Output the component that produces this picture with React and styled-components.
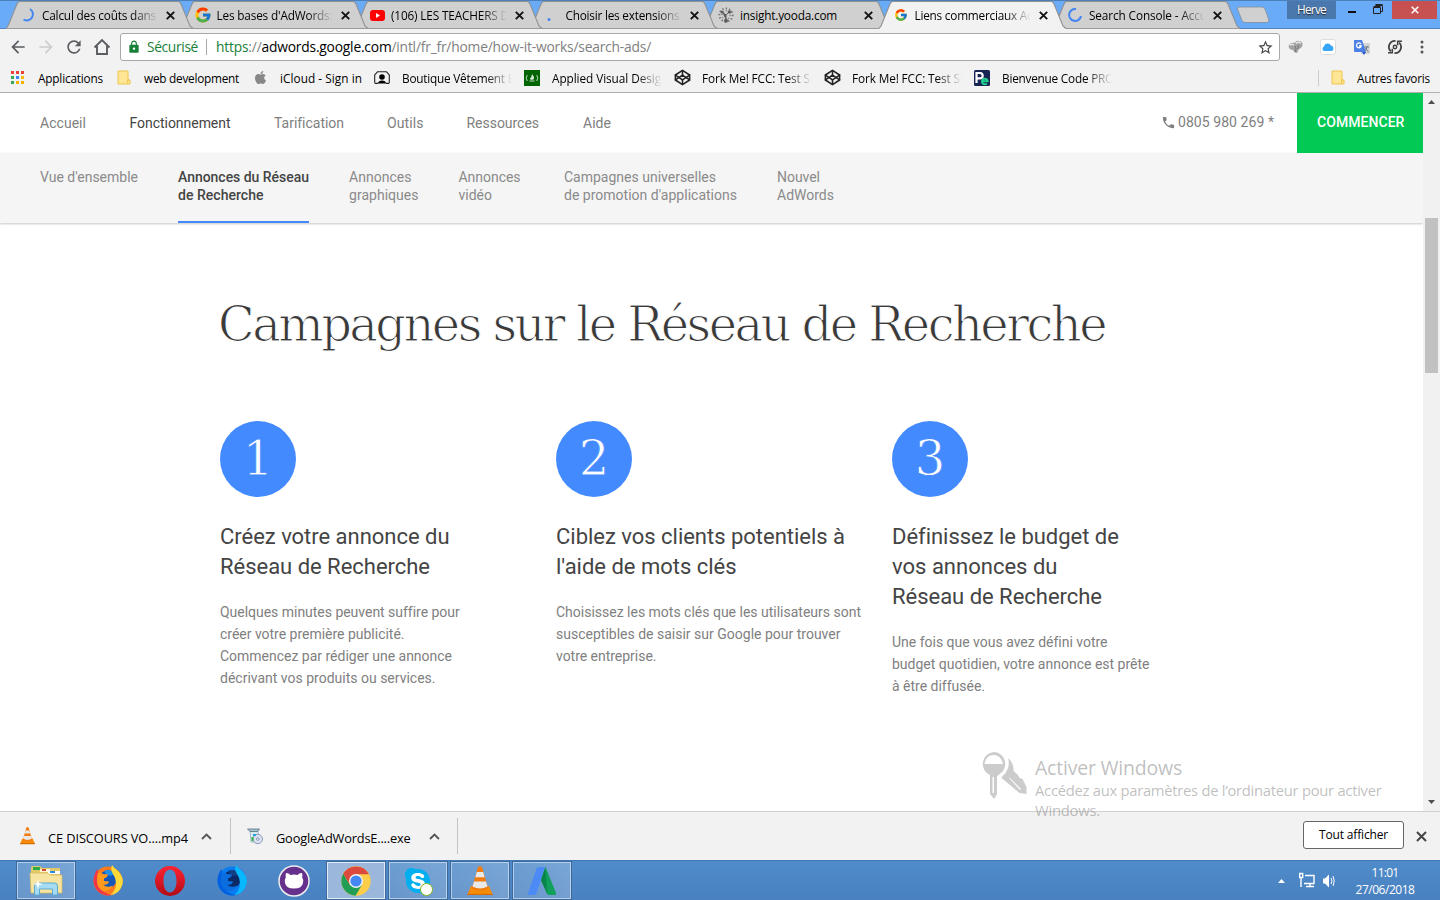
import React, { useLayoutEffect, useRef, useState } from "react";
import styled, { createGlobalStyle, css } from "styled-components";
import { FcGoogle } from "react-icons/fc";
import { FaApple, FaSkype } from "react-icons/fa";
import { MdPhone, MdStarBorder, MdLock, MdArrowBack, MdArrowForward, MdRefresh } from "react-icons/md";
import { FiCodepen } from "react-icons/fi";

const Global = createGlobalStyle`
  *{box-sizing:border-box}
  html,body{margin:0;padding:0;overflow:hidden;background:#fff}
  svg{display:block;flex:none}
`;
const ui = `"Segoe UI","Open Sans","Noto Sans",sans-serif`;
const roboto = `Roboto,"Liberation Sans",sans-serif`;

/* One line of text whose tracking is computed to fill a known width. */
const Line = styled.span`
  display: inline-block;
  white-space: pre;
  width: ${(p) => p.$w}px;
  flex: none;
`;
function Fit({ w, children, className }) {
  const ref = useRef(null);
  const [space, setSpace] = useState(0);
  useLayoutEffect(() => {
    const el = ref.current;
    const natural = el.getBoundingClientRect().width;
    const n = el.textContent.length;
    setSpace((w - natural) / n);
  }, [w]);
  return (
    <Line $w={w} className={className}>
      <span ref={ref} style={{ letterSpacing: `${space}px` }}>{children}</span>
    </Line>
  );
}

const Screen = styled.div`
  position: relative;
  width: 1440px;
  height: 900px;
  display: flex;
  flex-direction: column;
  overflow: hidden;
  font: 11.8px/16px ${ui};
  color: #000;
`;

/* ---------- tab strip ---------- */
const TabStrip = styled.div`
  height: 29px;
  flex: none;
  display: flex;
  padding-left: 6px;
  background: #6aabf7;
  border-top: 1px solid #4d7fb9;
  box-shadow: inset 0 -1px #5585bd;
`;
const TabBox = styled.div`
  position: relative;
  flex: none;
  width: 188px;
  height: 28px;
  margin-right: -13.5px;
  display: flex;
  align-items: center;
  padding: 0 0 0 14px;
  z-index: ${(p) => p.$z};
`;
const TabShape = styled.svg`
  position: absolute;
  left: 0;
  top: 0;
`;
const TabIcon = styled.span`
  position: relative;
  width: 16px;
  height: 16px;
  margin-right: 6px;
  display: flex;
  align-items: center;
  justify-content: center;
  flex: none;
`;
const fade = css`
  overflow: hidden;
  white-space: pre;
  mask-image: linear-gradient(90deg, #000 calc(100% - 26px), transparent);
`;
const TabTitle = styled.span`
  position: relative;
  width: 116px;
  margin-right: 8px;
  ${(p) => p.$fade && fade}
`;
const CloseMark = styled.svg`
  position: relative;
`;
const Close = ({ size = 9, w = 1.9, color = "#111" }) => (
  <CloseMark width={size} height={size} viewBox="0 0 9 9">
    <path d="M.8.8l7.4 7.4M8.2.8L.8 8.2" stroke={color} strokeWidth={w} fill="none" />
  </CloseMark>
);
function Tab({ icon, title, w, active, z, clip = true }) {
  return (
    <TabBox $z={active ? 20 : z}>
      <TabShape width="190" height="29" viewBox="0 0 190 29">
        <path d="M0 28L2 25 11 3Q12 .5 14 .5H172Q174 .5 175 3L184 25 187 28Z" fill={active ? "#f2f2f2" : "#d0d0d0"} />
        <path d="M0 27.5L2 25 11 3Q12 .5 14 .5H172Q174 .5 175 3L184 25 187 27.5" fill="none" stroke="#8e9194" strokeWidth="1.1" />
        {!active && <path d="M1 27.5H187" stroke="#9a9a9a" />}
      </TabShape>
      <TabIcon>{icon}</TabIcon>
      <TabTitle $fade={clip}><Fit w={w}>{title}</Fit></TabTitle>
      <Close />
    </TabBox>
  );
}
const NewTab = styled.svg`
  margin: 5px 0 0 8px;
`;
const WindowControls = styled.div`
  margin-left: auto;
  display: flex;
  align-items: flex-start;
  padding-right: 3px;
`;
const UserBadge = styled.div`
  width: 49px;
  height: 18px;
  margin-right: 12px;
  background: #4a78ac;
  color: #fff;
  text-align: center;
  line-height: 16px;
  text-shadow: 0 1px 1px #223;
`;
const CloseWindow = styled.div`
  width: 45px;
  height: 18px;
  margin-left: 7px;
  background: #c75050;
  display: flex;
  align-items: center;
  justify-content: center;
`;

/* ---------- toolbar ---------- */
const Toolbar = styled.div`
  height: 36px;
  flex: none;
  display: flex;
  align-items: center;
  background: #f2f2f2;
  padding: 0 16px 0 8px;
  color: #5a5a5a;
`;
const ToolButton = styled.span`
  width: 28px;
  flex: none;
  padding-left: ${(p) => p.$l || 0}px;
  color: ${(p) => (p.$off ? "#ccc" : "#5a5d61")};
`;
const Omnibox = styled.div`
  width: 1160px;
  flex: none;
  height: 28px;
  background: #fff;
  border: 1px solid #a8a8a8;
  border-radius: 3px;
  display: flex;
  align-items: center;
  padding: 0 5px 0 6px;
  font-size: 13.8px;
  color: #808080;
`;
const Secure = styled.span`
  color: #188038;
  margin-left: 6px;
  padding-right: 8px;
  margin-right: 9px;
  height: 16px;
  line-height: 15px;
  border-right: 1px solid #aaa;
`;
const Url = styled.span`
  flex: 1;
  line-height: 18px;
  em { color: #188038; font-style: normal; }
  b { color: #000; font-weight: 400; }
`;
const Extensions = styled.div`
  flex: 1;
  display: flex;
  align-items: center;
  justify-content: space-between;
  padding-left: 8px;
`;
const Bookmarks = styled.div`
  height: 28px;
  flex: none;
  display: flex;
  align-items: center;
  background: #f2f2f2;
  border-bottom: 1px solid #b0b0b0;
  padding: 0 10px 2px;
`;
const Bookmark = styled.div`
  flex: none;
  display: flex;
  align-items: center;
  width: ${(p) => p.$slot}px;
  > :last-child { ${(p) => p.$fade && fade} width: ${(p) => (p.$fade ? "110px" : "auto")}; }
`;
const BookmarkIcon = styled.span`
  width: ${(p) => p.$w || 28}px;
  flex: none;
`;
const OtherBookmarks = styled.div`
  margin-left: auto;
  border-left: 1px solid #ccc;
  display: flex;
  align-items: center;
  padding-left: 12px;
`;

/* ---------- web page ---------- */
const Viewport = styled.div`
  height: 718px;
  flex: none;
  display: flex;
  background: #fff;
  font-family: ${roboto};
`;
const Page = styled.main`
  width: 1423px;
`;
const MainNav = styled.nav`
  height: 60px;
  display: flex;
  align-items: center;
  padding-left: 40px;
  font-size: 14px;
  color: #808080;
`;
const NavLink = styled.a`
  width: ${(p) => p.$slot}px;
  color: ${(p) => (p.$on ? "#444" : "#808080")};
`;
const Phone = styled.div`
  margin-left: auto;
  display: flex;
  align-items: center;
  gap: 2px;
  padding-bottom: 2px;
`;
const Cta = styled.button`
  width: 126px;
  height: 60px;
  margin-left: 23px;
  border: 0;
  padding: 0 0 2px 20px;
  text-align: left;
  background: #02c953;
  color: #fff;
  font: 500 14px/18px ${roboto};
`;
const SubNav = styled.nav`
  height: 70px;
  display: flex;
  background: #f5f5f5;
  padding-left: 40px;
  box-shadow: 0 1px 2px rgba(0,0,0,.22);
`;
const SubLink = styled.a`
  margin-right: ${(p) => p.$gap || 40}px;
  padding-top: 15px;
  height: 70px;
  display: flex;
  flex-direction: column;
  font-size: 14px;
  line-height: 18px;
  font-weight: ${(p) => (p.$on ? 500 : 400)};
  color: ${(p) => (p.$on ? "#444" : "#8a8a8a")};
  border-bottom: ${(p) => (p.$on ? "2px solid #448aff" : "0")};
`;
const slab = css`
  font-family: "Roboto Slab","DejaVu Serif",serif;
  font-weight: 300;
`;
const Title = styled.h1`
  ${slab}
  margin: 66px 0 0 218px;
  height: 70px;
  font-size: 48px;
  line-height: 70px;
  color: #3a3a3a;
  -webkit-text-stroke: 1.1px #fff;
`;
const Steps = styled.section`
  display: grid;
  grid-template-columns: repeat(3, 336px);
  padding: 62px 0 0 220px;
`;
const Step = styled.article`
  display: flex;
  flex-direction: column;
`;
const StepNumber = styled.div`
  ${slab}
  width: 76px;
  height: 76px;
  border-radius: 50%;
  background: #448aff;
  color: #fff;
  font-size: 48px;
  line-height: 74px;
  text-align: center;
  -webkit-text-stroke: .8px #448aff;
`;
const StepTitle = styled.h2`
  margin: 25px 0 19px;
  display: flex;
  flex-direction: column;
  font-size: 22px;
  line-height: 30px;
  font-weight: 400;
  color: #444;
`;
const StepText = styled.p`
  margin: 0;
  display: flex;
  flex-direction: column;
  font-size: 14px;
  line-height: 22px;
  color: #808080;
`;
const Scrollbar = styled.div`
  width: 17px;
  background: #f1f1f1;
  display: flex;
  flex-direction: column;
  align-items: center;
  padding: 7px 0 7px;
`;
const Thumb = styled.div`
  width: 13px;
  height: 155px;
  margin-top: 114px;
  margin-bottom: auto;
  background: #c1c1c1;
`;

/* ---------- downloads ---------- */
const Downloads = styled.div`
  height: 49px;
  flex: none;
  display: flex;
  align-items: center;
  border-top: 1px solid #cfcfcf;
  background: #f2f2f2;
  padding: 0 13px 0 20px;
`;
const Download = styled.div`
  width: 211px;
  height: 36px;
  display: flex;
  align-items: center;
  padding: 0;
  margin-right: 16px;
  border-right: 1px solid #c4c4c4;
  font-size: 12.8px;
`;
const DownloadName = styled.span`
  width: 153px;
  margin: 4px 0 0 13px;
`;
const ShowAll = styled.button`
  margin: 0 12px 3px auto;
  width: 101px;
  height: 28px;
  padding: 0;
  background: #fff;
  border: 1px solid #666;
  border-radius: 3px;
  font: 500 12px/24px ${ui};
  color: #000;
`;

/* ---------- taskbar ---------- */
const Taskbar = styled.div`
  height: 40px;
  flex: none;
  display: flex;
  padding: 0 0 0 16px;
  background: linear-gradient(#4f8bca, #4a81c0);
  border-top: 1px solid #4079b8;
`;
const Task = styled.div`
  width: 60px;
  height: 39px;
  margin-right: 2px;
  display: flex;
  align-items: center;
  justify-content: center;
  border: 1px solid transparent;
  ${(p) => p.$open && css`
    border-color: #3f6b9c;
    box-shadow: inset 0 0 0 1px rgba(225,238,250,.6);
    background: linear-gradient(90deg, rgba(255,255,255,.16), rgba(255,255,255,.24));
  `}
  ${(p) => p.$active && css`
    background: #9bb7db;
    box-shadow: inset 0 0 0 1px #e2ebf5;
  `}
`;
const Tray = styled.div`
  margin-left: auto;
  display: flex;
  align-items: center;
  color: #fff;
  font-size: 12px;
`;
const Clock = styled.div`
  display: flex;
  flex-direction: column;
  align-items: center;
  width: 70px;
  margin: 0 20px 0 15px;
  line-height: 17px;
`;
const Watermark = styled.div`
  position: absolute;
  left: 981px;
  top: 751px;
  display: flex;
  gap: 8px;
  color: rgba(120,120,120,.48);
  font-size: 14.8px;
  line-height: 20px;
`;
const WatermarkText = styled.div`
  display: flex;
  flex-direction: column;
  padding-top: 4px;
`;
const WatermarkTitle = styled.div`
  font-size: 19.5px;
  line-height: 26px;
  height: 25px;
`;

/* ---------- drawings ---------- */
const Spinner = ({ d }) => (
  <svg width="16" height="16" viewBox="0 0 16 16"><path d={d} fill="none" stroke="#4285f4" strokeWidth="2" /></svg>
);
const YouTube = () => (
  <svg width="15" height="11" viewBox="0 0 15 11"><rect width="15" height="11" rx="3" fill="#f00" /><path d="M6 3l4 2.5L6 8z" fill="#fff" /></svg>
);
const Yooda = () => (
  <svg width="16" height="16" viewBox="0 0 16 16" fill="#5c5c5c">
    <circle cx="8" cy="8" r="6.6" fill="none" stroke="#777" strokeWidth="2" strokeDasharray="1.3 2.1" />
    <circle cx="8" cy="8" r="4.2" fill="none" stroke="#888" strokeWidth="1.4" strokeDasharray="1.2 2" />
    <circle cx="8" cy="13.8" r="2" /><circle cx="4" cy="5" r="1.5" /><circle cx="11.5" cy="5" r="1.8" />
    <path d="M8 13V8L4 5M8 8l3-3" stroke="#5c5c5c" />
  </svg>
);
const Folder = () => (
  <svg width="14" height="15" viewBox="0 0 14 15">
    <path d="M1 1h10v9h2v4H1z" fill="#ffe694" stroke="#efc64f" /><path d="M10.5 13.5V10h2" fill="none" stroke="#efc64f" />
  </svg>
);
const appColors = ["#ea4335", "#ea4335", "#ea4335", "#34a853", "#4285f4", "#fbbc05", "#34a853", "#f4b400", "#f4b400"];
const Apps = () => (
  <svg width="14" height="13" viewBox="-1 0 14 13">
    {appColors.map((c, i) => (
      <rect key={i} x={(i % 3) * 5} y={Math.floor(i / 3) * 5} width="3" height="3" fill={c} />
    ))}
  </svg>
);
const Shop = () => (
  <svg width="16" height="14" viewBox="0 0 16 14">
    <path d="M4 12.4H1.5Q.7 12.4.7 11V4L3.5.8h9L15.3 4v7q0 1.4-.8 1.4H12" fill="none" stroke="#222" strokeWidth="1.1" />
    <circle cx="8" cy="6" r="2.8" /><path d="M3.8 12.6Q4.500 9.600 8 9.600t4.200 3z" />
  </svg>
);
const Camp = () => (
  <svg width="16" height="16" viewBox="0 0 16 16">
    <rect width="16" height="16" fill="#006400" />
    <path d="M3.3 5Q1 8 3.3 11M12.7 5Q15 8 12.7 11M5.5 11h5" fill="none" stroke="#cfe3cf" strokeWidth=".9" />
    <path d="M8 4c.8 1.5 2.3 2.200 2 4-.2 1.300-1 1.800-1 1.800H7S5.700 9 6 7.700l1 .3z" fill="#d9e8d9" />
  </svg>
);
const Pe = () => (
  <svg width="16" height="16" viewBox="0 0 16 16">
    <rect width="16" height="16" rx="1.5" fill="#182453" />
    <path d="M2.5 13V3H6a2.700 2.700 0 0 1 0 5.400H3" fill="none" stroke="#fff" strokeWidth="2.2" />
    <path d="M8 11.300h5.600A2.800 2.800 0 1 0 12.800 13.500" fill="none" stroke="#1fd490" strokeWidth="2" />
  </svg>
);
const Home = () => (
  <svg width="18" height="18" viewBox="0 0 18 18"><path d="M1.5 9.500L9 2l7.500 7.500M4 8v8h10V8" fill="none" stroke="#5a5d61" strokeWidth="1.9" /></svg>
);
const Brain = () => (
  <svg width="15" height="14" viewBox="0 0 15 14">
    <path d="M.5 6Q1 3 4 3q2-1 3 0 1-3 4-2 4 0 3.500 4.500Q14 8 11 9l-2 4q-3 0-4-3-4 0-4.500-4" fill="#a3a3a3" />
    <path d="M1.500 5.500Q3 3.500 6 5M8 3.500q2-2 5-.5" fill="none" stroke="#e6e6e6" strokeWidth="1.5" />
    <path d="M7 6q1.500 2 .5 6M10 5q1 2-.5 4" stroke="#777" fill="none" />
  </svg>
);
const ICloud = () => (
  <svg width="16" height="16" viewBox="0 0 16 16">
    <rect x=".5" y=".5" width="15" height="15" rx="2" fill="#fff" stroke="#ddd" />
    <path d="M4 12a2.500 2.500 0 0 1 0-4.600A3.800 3.800 0 0 1 11 6.500a3 3 0 0 1 1 5.500z" fill="#36a5f5" />
  </svg>
);
const Translate = () => (
  <svg width="16" height="16" viewBox="0 0 16 16">
    <rect x="7" y="4" width="9" height="11" fill="#d5d5d5" /><path d="M0 1h8l4 12H1q-1 0-1-1z" fill="#4a80e8" /><path d="M8 13h4l-2 3z" fill="#2a56c6" />
    <path d="M7 5.200A2.400 2.400 0 1 0 7.200 7H5" fill="none" stroke="#fff" strokeWidth="1.3" /><path d="M10 8h5M13 7v1q-.5 3-2.500 4M11.500 9l3 4" stroke="#6b7d8c" fill="none" />
  </svg>
);
const SyncIcon = () => (
  <svg width="16" height="16" viewBox="0 0 16 16" fill="none" stroke="#444" strokeWidth="1.8">
    <path d="M8.500 2A6 6 0 0 0 3.800 12.300" /><path d="M7.500 14A6 6 0 0 0 12.200 3.700" />
    <path d="M1 13.800h4.300V9.800M15 2.200h-4.300v4" strokeWidth="1.6" />
    <circle cx="8" cy="8" r="1.7" strokeWidth="1.5" />
  </svg>
);
const Dots = () => (
  <svg width="4" height="14" viewBox="0 0 4 14" fill="#555"><circle cx="2" cy="2" r="1.5" /><circle cx="2" cy="7" r="1.5" /><circle cx="2" cy="12" r="1.5" /></svg>
);
const Arrow = ({ up }) => (
  <svg width="7" height="4" viewBox="0 0 7 4"><path d={up ? "M0 4L3.5 0 7 4z" : "M0 0L3.5 4 7 0z"} fill="#505050" /></svg>
);
const Chevron = () => (
  <svg width="11" height="7" viewBox="0 0 11 7"><path d="M1 6l4.500-4.500L10 6" fill="none" stroke="#555" strokeWidth="1.8" /></svg>
);
const Cone = ({ size }) => (
  <svg width={size} height={size * 1.15} viewBox="0 0 26 30">
    <path d="M4 20h18l4 9.500H0z" fill="#f58a0b" /><path d="M0 28h26v2H0z" fill="#d96c00" />
    <path d="M11 1q2-2 4 0l6 21q-8 5-16 0z" fill="#f07c10" /><path d="M9.800 6h6.400l1.500 5.200H8.300zM7 15.500h12l1.500 5q-7.500 4-15 0z" fill="#e9e9e9" />
  </svg>
);
const Installer = () => (
  <svg width="16" height="17" viewBox="0 0 16 17">
    <path d="M3 3h8l1 11H4z" fill="#dce9f3" stroke="#a9bccb" /><path d="M.5 1h12l-2 2.500H3z" fill="#a9c3d4" stroke="#55707f" strokeWidth=".8" />
    <circle cx="10.8" cy="11" r="4.7" fill="#dbe1f0" stroke="#8d9aba" /><circle cx="10.8" cy="11" r="1.3" fill="#fff" stroke="#8595b0" />
    <path d="M6 6h3v2H6z" fill="#26a6e0" /><path d="M4.500 9h2v4h-2z" fill="#38b24a" />
  </svg>
);
const Explorer = () => (
  <svg width="34" height="31" viewBox="0 0 34 31">
    <path d="M2 3Q2 1 4 1h7l2 2h18v24H2z" fill="#e4c968" /><path d="M4 2h7v3H4z" fill="#2aa84a" /><path d="M11 4h10v3H11z" fill="#fff5d0" /><path d="M13 4h4v2h-4z" fill="#d8442f" /><path d="M19 6h12v3H19z" fill="#fff" /><path d="M21 6h5v2h-5z" fill="#2d8be0" />
    <path d="M1 8h18l2 2h12v18H2z" fill="#f7e4a0" stroke="#d8ba5c" strokeWidth=".7" />
    <path d="M5.500 30V21q0-3 3-3h17q3 0 3 3v9h-5v-6h-13v6z" fill="#a6dcf3" stroke="#5ea9cf" /><path d="M9 14l1 4 4 1-4 1-1 4-1-4-4-1 4-1z" fill="#fff" />
  </svg>
);
const Fox = ({ dev }) => {
  const c = dev
    ? { body: "#0a7cf0", edge: "#0060df", tail: "#08b8ff", globe: "#0b2a66", light: "#123f86", face: "#0a6ee0" }
    : { body: "#ff7a1c", edge: "#f2364a", tail: "#ffd83a", globe: "#1557b8", light: "#1e90e8", face: "#ff9a1e" };
  return (
    <svg width="30" height="31" viewBox="0 0 30 31">
      <circle cx="15" cy="16" r="14.5" fill={c.body} />
      <path d="M3 6Q-2 16 3 24q6 8 16 6Q8 28 5 20 3 13 5 8l-.5-4z" fill={c.edge} />
      <circle cx="15" cy="14" r="8.8" fill={c.globe} /><path d="M11 6q7-3 11 3l-5 2-4-2z" fill={c.light} />
      <path d="M19 0q2 3 6 6 6 6 4.500 13Q27 29 17 30q6-4 6-12 0-5-3-9-3-4-1-9z" fill={c.tail} />
      <path d="M5 8q3-1 5 1l5 .5q0 2.500-4 4v2.500l5 .5q-1 4-6 3 4 4 10 1-4 7-11 5-6-4-5-12z" fill={c.face} />
    </svg>
  );
};
const Opera = () => (
  <svg width="30" height="30" viewBox="0 0 30 30">
    <defs><linearGradient id="op" x2="0" y2="1"><stop stopColor="#ff2333" /><stop offset="1" stopColor="#b20b16" /></linearGradient></defs>
    <path fillRule="evenodd" d="M15 0a15 15 0 1 0 0 30A15 15 0 0 0 15 0m0 3.500c4.200 0 6.500 5 6.500 11.500S19.200 26.500 15 26.500 8.500 21.500 8.500 15 10.800 3.500 15 3.500" fill="url(#op)" />
  </svg>
);
const GitHub = () => (
  <svg width="32" height="32" viewBox="0 0 32 32">
    <circle cx="16" cy="16" r="15" fill="#66308d" stroke="#eee" strokeWidth="1.5" />
    <path d="M8 8q3 0 4.500 2 3.500-.8 7 0Q21 8 24 8q.8 2 .2 4.500Q26 15 25 18q-1 5.500-9 5.500T7 18q-1-3 .8-5.500Q7.200 10 8 8" fill="#fff" />
  </svg>
);
const Chrome = () => (
  <svg width="30" height="30" viewBox="0 0 30 30">
    <circle cx="15" cy="15" r="14.7" fill="#fbcd48" />
    <path d="M15 15L8.700 18.500 2.300 7.600A14.700 14.700 0 0 0 14.500 29.700L21.200 18.500z" fill="#209e56" />
    <path d="M15 15L8.700 18.500 2.300 7.600A14.700 14.700 0 0 1 28 8.300H15z" fill="#dc4a3e" />
    <circle cx="15" cy="15" r="7" fill="#f3f3f3" /><circle cx="15" cy="15" r="5.6" fill="#4587f2" />
  </svg>
);
const SkypeBox = styled.span`
  position: relative;
  width: 30px;
  height: 30px;
  border-radius: 10px;
  color: #00aff0;
  background: radial-gradient(circle, #fff 45%, transparent 46%);
`;
const Status = styled.i`
  position: absolute;
  right: 0;
  bottom: 0;
  width: 13px;
  height: 13px;
  border-radius: 50%;
  background: #fff;
  border: 1.5px solid #83b81a;
`;
const AdWords = () => (
  <svg width="30" height="30" viewBox="0 0 30 30">
    <path d="M1 27L9.500 2.500Q10 1 11.500 1H18L9.500 27.500Q9 29 7.500 29H2Q.5 29 1 27z" fill="#4c8bf5" />
    <path d="M18.500 1L29 27q.5 2-1 2h-6q-1.500 0-2-1.500L14 14z" fill="#10a05b" /><path d="M18.500 1L14 14l6 13.500z" fill="#0a8549" />
  </svg>
);
const Keys = () => (
  <svg width="46" height="49" viewBox="0 0 46 49" fill="#ccc">
    <path fillRule="evenodd" d="M13 1a12 12 0 0 1 5 22.500l-2 2V43l-3 5-4-5V24A12 12 0 0 1 13 1m-9.500 12h18.500Q20 4 12.500 4T3.500 13m8 13v16h1.500V26z" />
    <path fillRule="evenodd" d="M27 7q6 5 5.500 13l4.500 4 1.500 3 3 1 2 4 2 4v7l-7-1-18-15 1-2q4-3 5.500-8 1.500-5 0-10M28 27l11 12 1-1-11-11z" />
  </svg>
);

const tabs = [
  [<Spinner d="M10 2A6 6 0 1 1 3.5 12.5" />, "Calcul des coûts dans", 114],
  [<FcGoogle size={18} />, "Les bases d'AdWords:", 116],
  [<YouTube />, "(106) LES TEACHERS D", 118],
  [<svg width="16" height="16"><circle cx="5" cy="12.5" r="1.5" fill="#4285f4" /></svg>, "Choisir les extensions", 114],
  [<Yooda />, "insight.yooda.com", 97, false, false],
  [<FcGoogle size={14} />, "Liens commerciaux Ac", 118, true],
  [<Spinner d="M9 2A6 6 0 1 0 14 9" />, "Search Console - Accu", 118],
];
const marks = [
  [<Apps />, "Applications", 65, 107],
  [<Folder />, "web development", 95, 136, false, 27],
  [<FaApple size={15} color="#888" />, "iCloud - Sign in", 82, 121, false, 27],
  [<Shop />, "Boutique Vêtement E", 112, 150, true],
  [<Camp />, "Applied Visual Desig", 109, 150, true],
  [<FiCodepen size={17} color="#222" strokeWidth={2.2} />, "Fork Me! FCC: Test Su", 115, 150, true],
  [<FiCodepen size={17} color="#222" strokeWidth={2.2} />, "Fork Me! FCC: Test Su", 115, 150, true],
  [<Pe />, "Bienvenue Code PRO", 112, 150, true],
];
const nav = [["Accueil", 46, 89.5], ["Fonctionnement", 101, 144.5], ["Tarification", 69.5, 113], ["Outils", 36.5, 79.5], ["Ressources", 72.5, 116.5], ["Aide", 28, 60]];
const sub = [
  [["Vue d'ensemble", 98]],
  [["Annonces du Réseau", 131], ["de Recherche", 85.5]],
  [["Annonces", 62.5], ["graphiques", 69.5]],
  [["Annonces", 62], ["vidéo", 33.5]],
  [["Campagnes universelles", 152], ["de promotion d'applications", 173]],
  [["Nouvel", 43], ["AdWords", 57]],
];
const steps = [
  [[["Créez votre annonce du", 229.5], ["Réseau de Recherche", 210]],
    [["Quelques minutes peuvent suffire pour", 238.5], ["créer votre première publicité.", 184.5], ["Commencez par rédiger une annonce", 232], ["décrivant vos produits ou services.", 215.5]]],
  [[["Ciblez vos clients potentiels à", 289], ["l'aide de mots clés", 180.5]],
    [["Choisissez les mots clés que les utilisateurs sont", 305], ["susceptibles de saisir sur Google pour trouver", 284.5], ["votre entreprise.", 100.5]]],
  [[["Définissez le budget de", 226], ["vos annonces du", 165.5], ["Réseau de Recherche", 210]],
    [["Une fois que vous avez défini votre", 215], ["budget quotidien, votre annonce est prête", 257.5], ["à être diffusée.", 93]]],
];
const Lines = ({ items }) => items.map(([t, w], i) => <Fit key={i} w={w}>{t}</Fit>);

export default function App() {
  return (
    <Screen>
      <Global />
      <TabStrip>
        {tabs.map(([icon, title, w, active, clip], i) => (
          <Tab key={i} icon={icon} title={title} w={w} active={active} clip={clip} z={10 - i} />
        ))}
        <NewTab width="34" height="18" viewBox="0 0 34 18">
          <path d="M3 1h23q2 0 3 2l4 11q0 2-2 2.500H9q-2 0-3-2L1.500 3Q1 1 3 1" fill="#d0d0d0" stroke="#8797a8" />
        </NewTab>
        <WindowControls>
          <UserBadge><Fit w={29}>Herve</Fit></UserBadge>
          <svg width="9" height="14"><path d="M0 11h8" stroke="#111" strokeWidth="2" /></svg>
          <svg width="28" height="14" viewBox="0 0 28 14" fill="none" stroke="#222"><path d="M16.500 6.500h7v6h-7zM16.500 5.500h7M18.500 5V4.500h7v6h-2M18.500 3.500h7" /></svg>
          <CloseWindow><Close size={8} color="#fff" w={1.8} /></CloseWindow>
        </WindowControls>
      </TabStrip>
      <Toolbar>
        <ToolButton><MdArrowBack size={20} /></ToolButton>
        <ToolButton $off><MdArrowForward size={20} /></ToolButton>
        <ToolButton><MdRefresh size={20} /></ToolButton>
        <ToolButton $l={1}><Home /></ToolButton>
        <Omnibox>
          <MdLock size={14} color="#188038" />
          <Secure><Fit w={51}>Sécurisé</Fit></Secure>
          <Url>
            <Fit w={435}><em>https</em>://<b>adwords.google.com</b>/intl/fr_fr/home/how-it-works/search-ads/</Fit>
          </Url>
          <MdStarBorder size={17} color="#444" />
        </Omnibox>
        <Extensions><Brain /><ICloud /><Translate /><SyncIcon /><Dots /></Extensions>
      </Toolbar>
      <Bookmarks>
        {marks.map(([icon, t, w, slot, f, iw], i) => (
          <Bookmark key={i} $slot={slot} $fade={f}><BookmarkIcon $w={iw}>{icon}</BookmarkIcon><span><Fit w={w}>{t}</Fit></span></Bookmark>
        ))}
        <OtherBookmarks><BookmarkIcon $w={26}><Folder /></BookmarkIcon><Fit w={73}>Autres favoris</Fit></OtherBookmarks>
      </Bookmarks>
      <Viewport>
        <Page>
          <MainNav>
            {nav.map(([t, w, slot], i) => <NavLink key={t} $slot={slot} $on={i === 1}><Fit w={w}>{t}</Fit></NavLink>)}
            <Phone><MdPhone size={15} /><Fit w={96}>0805 980 269 *</Fit></Phone>
            <Cta><Fit w={87.5}>COMMENCER</Fit></Cta>
          </MainNav>
          <SubNav>
            {sub.map((lines, i) => <SubLink key={i} $on={i === 1} $gap={i === 3 ? 43.5 : 40}><Lines items={lines} /></SubLink>)}
          </SubNav>
          <Title><Fit w={887}>Campagnes sur le Réseau de Recherche</Fit></Title>
          <Steps>
            {steps.map(([head, body], i) => (
              <Step key={i}>
                <StepNumber>{i + 1}</StepNumber>
                <StepTitle><Lines items={head} /></StepTitle>
                <StepText><Lines items={body} /></StepText>
              </Step>
            ))}
          </Steps>
        </Page>
        <Scrollbar><Arrow up /><Thumb /><Arrow /></Scrollbar>
      </Viewport>
      <Downloads>
        <Download><Cone size={15} /><DownloadName><Fit w={140}>CE DISCOURS VO....mp4</Fit></DownloadName><Chevron /></Download>
        <Download><Installer /><DownloadName><Fit w={134.5}>GoogleAdWordsE....exe</Fit></DownloadName><Chevron /></Download>
        <ShowAll><Fit w={69}>Tout afficher</Fit></ShowAll>
        <Close size={11} color="#444" w={1.6} />
      </Downloads>
      <Taskbar>
        <Task $open><Explorer /></Task>
        <Task><Fox /></Task>
        <Task><Opera /></Task>
        <Task><Fox dev /></Task>
        <Task><GitHub /></Task>
        <Task $open $active><Chrome /></Task>
        <Task $open><SkypeBox><FaSkype size={30} /><Status /></SkypeBox></Task>
        <Task $open><Cone size={26} /></Task>
        <Task $open><AdWords /></Task>
        <Tray>
          <svg width="9" height="6" viewBox="0 0 9 6"><path d="M1 5l3.500-4L8 5z" fill="#fff" /></svg>
          <svg width="49" height="18" viewBox="0 0 49 18" fill="none" stroke="#fff" strokeWidth="1.4">
            <path d="M19 3.500h9v8H18M20 14.500h8M24 11.500v3M15 6v9" /><path d="M13.700 1.500h3v4h-3z" />
            <path d="M37 6.500h2l4-4v13l-4-4h-2z" fill="#fff" stroke="none" /><path d="M45 6q2 3 0 6M47 4q2.500 5 0 10" strokeWidth="1" />
          </svg>
          <Clock><Fit w={27}>11:01</Fit><Fit w={59}>27/06/2018</Fit></Clock>
        </Tray>
      </Taskbar>
      <Watermark>
        <Keys />
        <WatermarkText>
          <WatermarkTitle><Fit w={147}>Activer Windows</Fit></WatermarkTitle>
          <Fit w={346.5}>Accédez aux paramètres de l’ordinateur pour activer</Fit>
          <Fit w={65}>Windows.</Fit>
        </WatermarkText>
      </Watermark>
    </Screen>
  );
}
